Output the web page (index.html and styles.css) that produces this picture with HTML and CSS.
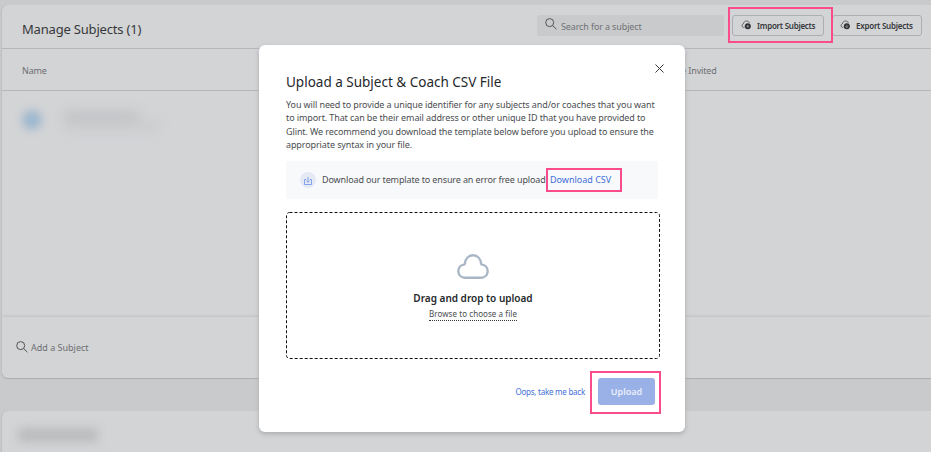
FILE: index.html
```
<!DOCTYPE html>
<html lang="en">
<head>
<meta charset="utf-8">
<title>Manage Subjects</title>
<link rel="stylesheet" href="styles.css">
</head>
<body>
<main class="page">
  <section class="card">
    <header class="toolbar">
      <h1 class="heading">Manage Subjects (1)</h1>
      <div class="search">
        <svg class="lens" viewBox="0 0 12 12"><circle cx="4.7" cy="4.6" r="4"/><path d="M7.7 7.6 11.4 11.2"/></svg>
        <span>Search for a subject</span>
      </div>
      <button class="btn import">
        <svg class="cloud-icon" viewBox="0 0 11 10"><path class="line" d="M3.3 7.500H2.600A1.900 1.900 0 0 1 2.400 3.800C2.800 1.900 4 1 5.600 1c1.500 0 2.500.8 2.800 2"/><circle cx="6.800" cy="6.200" r="3"/><path class="mark" d="M6.800 7.600V5.200M5.600 6.200H8"/></svg>
        <span>Import Subjects</span>
      </button>
      <button class="btn export">
        <svg class="cloud-icon" viewBox="0 0 11 10"><path class="line" d="M3.3 7.500H2.600A1.900 1.900 0 0 1 2.400 3.800C2.800 1.900 4 1 5.600 1c1.500 0 2.500.8 2.800 2"/><circle cx="6.800" cy="6.200" r="3"/><path class="mark" d="M6.800 4.800V6.800M5.400 6.500 6.800 7.500 8.200 6.500"/></svg>
        <span>Export Subjects</span>
      </button>
    </header>
    <div class="columns"><span>Name</span><span class="invited">Date Invited</span></div>
    <div class="rows"><i class="avatar"></i><div class="person"><i></i><i></i></div></div>
    <footer class="add">
      <svg class="lens" viewBox="0 0 12 12"><circle cx="4.7" cy="4.6" r="4"/><path d="M7.7 7.6 11.4 11.2"/></svg>
      <span>Add a Subject</span>
    </footer>
  </section>
  <section class="card next"><i class="redacted"></i></section>
</main>
<div class="overlay">
  <div class="modal">
    <svg class="close" viewBox="0 0 9 9"><path d="M.5.5l8 8M8.5.5l-8 8"/></svg>
    <h2 class="title">Upload a Subject &amp; Coach CSV File</h2>
    <p class="intro">You will need to provide a unique identifier for any subjects and/or coaches that you want<br>to import. That can be their email address or other unique ID that you have provided to<br>Glint. We recommend you download the template below before you upload to ensure the<br>appropriate syntax in your file.</p>
    <div class="template">
      <span class="badge"><svg viewBox="0 0 8 8"><path d="M2.2 2.5H.5v5h7v-5H5.8M4 0v5.2M2.4 3.8 4 5.4l1.6-1.6"/></svg></span>
      <span class="hint">Download our template to ensure an error free upload</span>
      <a class="download">Download CSV</a>
    </div>
    <div class="drop">
      <svg class="frame"><rect x="0.5" y="0.5" width="373" height="146" rx="3"/></svg>
      <svg class="cloud" viewBox="0 0 32 25"><path d="M7.800 23.700h16.400a6.600 6.600 0 0 0 1-13.100c-.6-.1-1-.5-1.100-1.100C23.500 4.500 20.300 1.300 16 1.300S8.500 4.500 7.900 9.500c-.1.600-.5 1-1.100 1.100a6.600 6.600 0 0 0 1 13.100Z"/></svg>
      <strong class="drag">Drag and drop to upload</strong>
      <a class="browse">Browse to choose a file</a>
    </div>
    <div class="actions">
      <a class="cancel">Oops, take me back</a>
      <button class="upload">Upload</button>
    </div>
  </div>
</div>
<i class="mark-box mark-import"></i>
<i class="mark-box mark-download"></i>
<i class="mark-box mark-upload"></i>
</body>
</html>
```

FILE: styles.css
```
* { box-sizing: border-box; }
body { margin: 0; width: 931px; height: 452px; overflow: hidden; position: relative; background: #c9cacc; color: #36383b; font-family: "Noto Sans", sans-serif; font-size: 9px; white-space: nowrap; }
h1, h2, p { margin: 0; font-weight: 400; }
button { font-family: inherit; margin: 0; padding: 0; }
svg { display: block; fill: none; flex: none; }
.page { padding: 5px 0 0 2px; }
.card { height: 373px; background: #d3d4d6; border-radius: 6px 0 0 6px; box-shadow: 0 1px 1px #a9abad, -1px 0 1px #c0c2c4; display: flex; flex-direction: column; }
.toolbar { height: 44px; border-bottom: 1px solid #b5b8ba; padding-left: 20px; display: flex; align-items: center; }
.heading { width: 515px; font-size: 13px; line-height: 18px; padding-top: 4px; letter-spacing: -.19px; }
.search { width: 187px; height: 21px; margin-top: -3px; background: #c9cacc; border-radius: 3px; display: flex; align-items: center; padding-left: 8px; gap: 4px; color: #707376; letter-spacing: -.13px; }
.search span { padding-top: 3px; }
.search .lens { margin-top: -2px; }
.lens { width: 12px; height: 12px; stroke: #505356; stroke-width: 1; }
.btn { height: 21px; margin: -3px 0 0 8px; width: 92px; border: 1px solid #acafb1; border-radius: 3px; background: none; display: flex; align-items: center; padding-left: 8px; gap: 5px; font-size: 8px; font-weight: 600; letter-spacing: -.25px; color: #36383b; }
.export { width: 90px; padding-left: 7px; }
.btn span { padding-top: 1px; }
.cloud-icon { width: 11px; height: 10px; }
.cloud-icon .line { stroke: #55585b; stroke-width: .9; }
.cloud-icon circle { fill: #303235; }
.cloud-icon .mark { stroke: #b5b7b9; stroke-width: .7; }
.columns { height: 42px; border-bottom: 1px solid #b5b8ba; padding: 2px 0 0 20px; display: flex; align-items: center; color: #6c6f72; letter-spacing: -.15px; }
.invited { margin-left: 620px; }
.rows { flex: 1; display: flex; padding: 19px 0 0 20px; gap: 22px; }
.avatar { width: 20px; height: 20px; background: #9db8ce; border-radius: 50%; filter: blur(4px); }
.person { display: flex; flex-direction: column; gap: 3px; padding-top: 2px; filter: blur(6px); }
.person i { width: 75px; height: 8px; background: #bdbfc1; }
.person i + i { width: 95px; height: 6px; background: #c5c7c9; }
.add { height: 61px; box-shadow: 0 -1px 3px #bfc1c3; display: flex; align-items: center; padding-left: 14px; gap: 3px; color: #6c6f72; }
.add .lens { margin-top: -2px; }
.next { height: 60px; margin-top: 33px; padding: 17px 16px; }
.redacted { width: 80px; height: 14px; background: #bbbcbe; filter: blur(5px); }
.overlay { position: absolute; inset: 0; padding: 45px 0 0 259px; }
.modal { position: relative; width: 426px; height: 387px; background: #fff; border-radius: 6px; box-shadow: 0 2px 5px #aaacae; padding: 27px 25px 0 27px; display: flex; flex-direction: column; }
.close { position: absolute; left: 396px; top: 19px; width: 9px; height: 9px; stroke: #36383b; stroke-width: 1; }
.title { font-size: 13.5px; line-height: 20px; color: #25282b; }
.intro { line-height: 13.35px; margin-top: 6px; color: #4b4e51; letter-spacing: -.105px; }
.template { width: 372px; height: 38px; margin-top: 10px; background: #f8f9fb; display: flex; align-items: center; padding-left: 14px; color: #4b4e51; }
.badge { width: 16px; height: 16px; border-radius: 50%; background: #e4e9f4; display: grid; place-items: center; margin-right: 6px; }
.badge svg { width: 8px; height: 8px; margin-top: 1px; stroke: #769be8; stroke-width: .9; }
.hint { width: 228px; letter-spacing: -.13px; }
.hint, .download { margin-top: -2px; }
.download, .cancel { color: #426ed8; }
.drop { position: relative; width: 374px; height: 147px; margin-top: 13px; display: flex; flex-direction: column; align-items: center; padding-top: 42px; }
.frame { position: absolute; inset: 0; width: 374px; height: 147px; stroke: #111; stroke-dasharray: 3 2; }
.cloud { width: 32px; height: 25px; stroke: #a9b6c6; stroke-width: 2.4; }
.drag { font-size: 10px; line-height: 14px; margin-top: 12px; font-weight: 600; color: #25282b; }
.browse { font-size: 8px; line-height: 12px; margin-top: 3px; border-bottom: 1px dotted #36383b; color: #4b4e51; letter-spacing: .07px; }
.actions { display: flex; margin-top: 19px; align-items: center; justify-content: flex-end; padding-right: 4px; gap: 13px; }
.cancel { font-size: 8px; letter-spacing: -.24px; }
.upload { width: 57px; height: 27px; margin-right: 1px; border: 0; border-radius: 3px; background: #9ab1e8; color: #e9eefb; font-size: 9px; font-weight: 600; }
.mark-box { position: absolute; border: 2px solid #fa4b8b; }
.mark-import { left: 728px; top: 7px; width: 105px; height: 36px; }
.mark-download { left: 546px; top: 168px; width: 76px; height: 24px; }
.mark-upload { left: 590px; top: 371px; width: 71px; height: 43px; }
```
